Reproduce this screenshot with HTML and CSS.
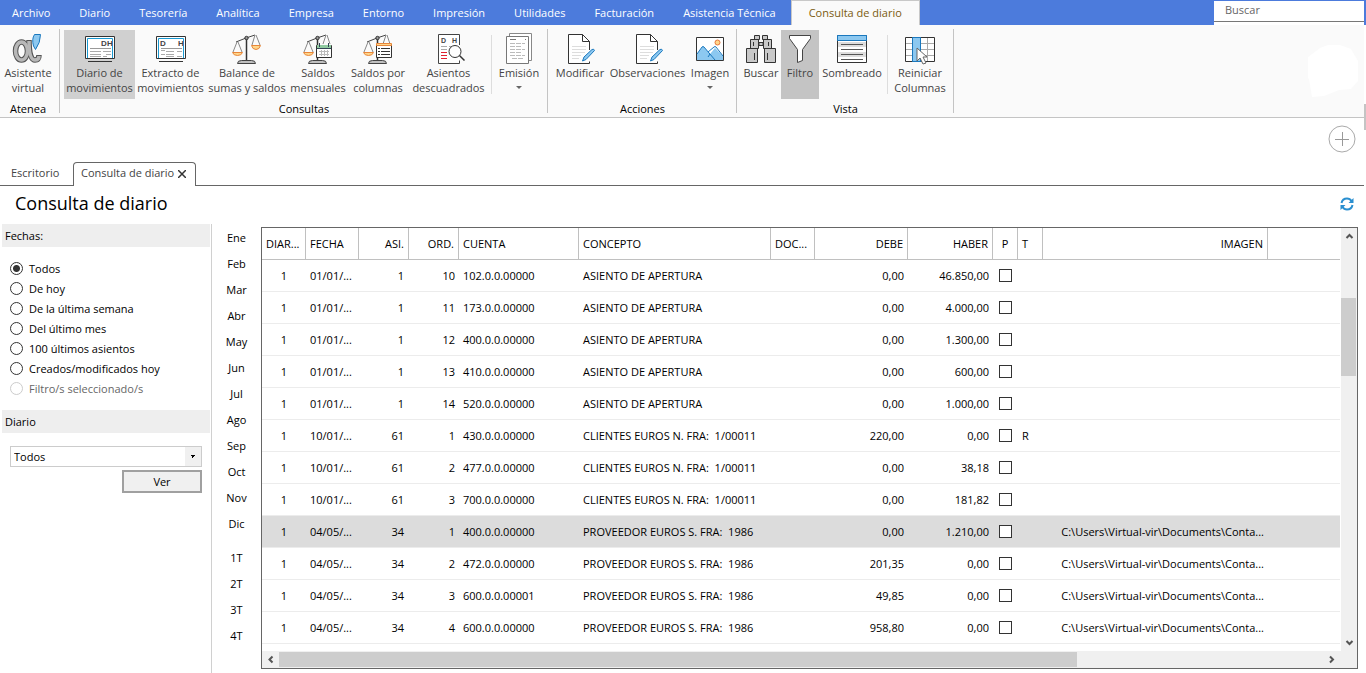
FILE: index.html
```html
<!DOCTYPE html>
<html lang="es">
<head>
<meta charset="utf-8">
<title>Consulta de diario</title>
<link rel="stylesheet" href="styles.css">
</head>
<body>
<svg class="defs" width="0" height="0" aria-hidden="true">
  <defs>
    <g id="scale-left">
      <path d="M5 9 15 5l9-3" fill="none" stroke="#444"/>
      <path d="M6 9 2 19M7 9l4 10" fill="none" stroke="#888"/>
      <path d="M1.500 19.500h10q-1 3-5 3t-5-3z" fill="#ffd68a" stroke="#e8863a"/>
      <path d="M15.500 5v22" stroke="#333" stroke-width="1.500"/>
      <circle cx="15.500" cy="5" r="1.700" fill="#999" stroke="#333"/>
      <path d="M6.500 30.500q0-3 4-3h10q4 0 4 3z" fill="#c0c0c0" stroke="#444"/>
    </g>
    <g id="page-pencil">
      <path d="M4.500 1.500h14l7 7v21h-21z" fill="#fff"/>
      <path d="M25.500 17V8.500l-7-7h-14v29h21v-2" fill="none" stroke="#333"/>
      <path d="M18.500 1.500v7h7" fill="none" stroke="#333"/>
      <path d="M8 13.500h14M8 16.500h14M8 19.500h13M8 22.500h9M8 25.500h7" stroke="#ddd"/>
      <path d="m18.500 28 1.500-4 8-7.500q2-1 2.500 1L22 26.500z" fill="#8cc8f0" stroke="#1a78be"/>
    </g>
  </defs>
</svg>

<header>
  <nav class="menu">
    <a class="menu-item" href="#">Archivo</a>
    <a class="menu-item" href="#">Diario</a>
    <a class="menu-item" href="#">Tesorería</a>
    <a class="menu-item" href="#">Analítica</a>
    <a class="menu-item" href="#">Empresa</a>
    <a class="menu-item" href="#">Entorno</a>
    <a class="menu-item" href="#">Impresión</a>
    <a class="menu-item" href="#">Utilidades</a>
    <a class="menu-item" href="#">Facturación</a>
    <a class="menu-item" href="#">Asistencia Técnica</a>
    <a class="menu-item current" href="#">Consulta de diario</a>
    <div class="search"><input type="text" placeholder="Buscar" aria-label="Buscar"></div>
  </nav>

  <div class="ribbon">
    <section class="group">
      <div class="tools">
        <button class="tool w56">
          <svg viewBox="0 0 32 32"><g fill="none" stroke="#555" stroke-width="5.500"><ellipse cx="9.500" cy="18" rx="6" ry="9"/><path d="M17 7q0 20 6 20 4 0 4-5"/></g><g fill="none" stroke="#b8b8b8" stroke-width="3.500"><ellipse cx="9.500" cy="18" rx="6" ry="9"/><path d="M17 8q0 19 6 19 4 0 4-4"/></g><path d="M21.500 13q-2-7 1-11.500h6q0 8-5 15z" fill="#8cc8f0" stroke="#1a78be"/></svg>
          <span>Asistente<br>virtual</span></button>
      </div>
      <h2>Atenea</h2>
    </section>
    <section class="group">
      <div class="tools">
        <button class="tool w71 on">
          <svg viewBox="0 0 32 32"><path d="M1.500 3.500h29v22h-29z" fill="#fff" stroke="#333"/><path d="M3.500 25V5.500h25V25" fill="none" stroke="#1a9ad2"/><path d="M4 28.500h24" stroke="#333"/><path d="M6 15.500h21" stroke="#999"/><path d="M6 18.500h11M19 18.500h8M6 21.500h11M22 21.500h5M6 23.500h11M19 23.500h4" stroke="#aaa"/><text x="17" y="13" class="dh">D</text><text x="23" y="13" class="dh">H</text></svg>
          <span>Diario de<br>movimientos</span></button>
        <button class="tool w71">
          <svg viewBox="0 0 32 32"><path d="M1.500 3.500h29v22h-29z" fill="#fff" stroke="#333"/><path d="M3.500 25V5.500h25V25" fill="none" stroke="#1a9ad2"/><path d="M4 28.500h24" stroke="#333"/><path d="M6 15.500h21" stroke="#999"/><path d="M6 17.500h4M11 18.500h8M22 18.500h5M6 21.500h4M11 21.500h8M11 23.500h8M22 23.500h5" stroke="#aaa"/><text x="5" y="13" class="dh">D</text><text x="23" y="13" class="dh">H</text></svg>
          <span>Extracto de<br>movimientos</span></button>
        <button class="tool w82">
          <svg viewBox="0 0 32 32"><use href="#scale-left"/><path d="m24 2-3 10M25 2l4 10" fill="none" stroke="#888"/><path d="M20.500 12.500h9q-1 4-4.500 4t-4.500-4z" fill="#ffd68a" stroke="#e8863a"/></svg>
          <span>Balance de<br>sumas y saldos</span></button>
        <button class="tool w60">
          <svg viewBox="0 0 32 32"><use href="#scale-left"/><path d="m24 2-3 9M25 2l3 9" fill="none" stroke="#888"/><path d="M14.500 12.500h15v12h-15z" fill="#fff" stroke="#333"/><path d="M15 12h14v3H15z" fill="#8fcaa0"/><path d="M14.500 15.500h15M17.500 10v4M26.500 10v4" stroke="#345"/><path d="M17 18.500h10M17 21.500h10M19.500 17v6M22.500 17v6M25.500 17v6" stroke="#bbb"/></svg>
          <span>Saldos<br>mensuales</span></button>
        <button class="tool w60">
          <svg viewBox="0 0 32 32"><use href="#scale-left"/><path d="m24 2-3 9M25 2l3 9" fill="none" stroke="#888"/><path d="M14.500 11.500h15v13h-15z" fill="#fff" stroke="#333"/><path d="M14.500 10.500h15v2h-15z" fill="#ffd68a" stroke="#e8863a"/><path d="M16 15.500h2M16 18.500h2M16 21.500h2M19 15.500h9M19 18.500h9M19 21.500h9" stroke="#333"/></svg>
          <span>Saldos por<br>columnas</span></button>
        <button class="tool w81">
          <svg viewBox="0 0 32 32"><path d="M26.500 12V1.500h-21v29h21v-3" fill="#fff" stroke="#444"/><text x="8" y="10" class="dh small">D</text><text x="19" y="10" class="dh small">H</text><path d="M8 13.500h6M8 16.500h6M16 13.500h3" stroke="#aaa"/><path d="M8 19.500h6M8 22.500h6M8 25.500h6" stroke="#e02030"/><circle cx="22" cy="18.500" r="6" fill="#fff" stroke="#333"/><path d="m26.500 22.500 5 5" stroke="#333" stroke-width="1.500"/></svg>
          <span>Asientos<br>descuadrados</span></button>
        <i class="divider"></i>
        <button class="tool w50">
          <svg viewBox="0 0 32 32"><path d="M6.500 4V.500h22v27H26" fill="#fff" stroke="#888"/><path d="M3.500 3.500h22v27h-22z" fill="#fff" stroke="#777"/><path d="M7 6.500h6M22 6.500h1" stroke="#777"/><path d="M7 10.500h15M7 13.500h12M7 16.500h15M7 19.500h12M7 22.500h15M9 25.500h11" stroke="#bbb" stroke-dasharray="5 1"/></svg>
          <span>Emisión</span><i class="caret"></i></button>
      </div>
      <h2>Consultas</h2>
    </section>
    <section class="group">
      <div class="tools">
        <button class="tool w56"><svg viewBox="0 0 32 32"><use href="#page-pencil"/></svg><span>Modificar</span></button>
        <button class="tool w79"><svg viewBox="0 0 32 32"><use href="#page-pencil"/></svg><span>Observaciones</span></button>
        <button class="tool w46"><svg viewBox="0 0 32 32"><path d="M2.500 4.500h27v23h-27z" fill="#fff" stroke="#333"/><path d="m3 21 6-8 7 8 5-6 8 8v4H3z" fill="#8cc8f0"/><path d="m3 21 5-7q1-1 2 0l11 13M14 19l6-5q1-1 2 0l7 9M16 21l-2 3" fill="none" stroke="#1a78be"/><circle cx="23.500" cy="9.500" r="2.500" fill="#ffd68a" stroke="#e8763a"/></svg><span>Imagen</span><i class="caret"></i></button>
      </div>
      <h2>Acciones</h2>
    </section>
    <section class="group">
      <div class="tools">
        <button class="tool w40"><svg viewBox="0 0 32 32"><path d="M9.500 2.500h5v4h-5zM17.500 2.500h5v4h-5zM5.500 6.500h8v9h-8zM18.500 6.500h8v9h-8zM1.500 15.500h11v14h-11zM19.500 15.500h11v14h-11zM14 9.500h4v3h-4z" fill="#c8c8c8" stroke="#333"/><path d="M8.500 9v4M23.500 9v4M9.500 20v7M22.500 20v7" stroke="#333"/></svg><span>Buscar</span></button>
        <button class="tool w38 on filter"><svg viewBox="0 0 32 32"><path d="M5.500 2.500h21v3l-8 11v11l-5 2v-13l-8-11z" fill="#fff" stroke="#444"/></svg><span>Filtro</span></button>
        <button class="tool w66"><svg viewBox="0 0 32 32"><path d="M1.500 2.500h29v27h-29z" fill="#fff" stroke="#333"/><path d="M2 9h28v5H2zM2 19h28v5H2z" fill="#ddd"/><path d="M1.500 2.500h29v5h-29z" fill="#8cc8f0" stroke="#1a78be"/><path d="M5 11.500h22M5 16.500h22M5 21.500h22M5 26.500h22" stroke="#555"/></svg><span>Sombreado</span></button>
        <i class="divider"></i>
        <button class="tool w60"><svg viewBox="0 0 32 32"><path d="M1.500 4.500h29v24h-29z" fill="#fff" stroke="#333"/><path d="M2 10.500h28M2 16.500h28M2 22.500h28M23.500 5v23" stroke="#aaa"/><path d="M8.500 4.500h8v24h-8z" fill="#8cc8f0" stroke="#1a78be"/><path d="M13 15v13l3-3 3 6 3-1-3-6h4z" fill="#fff" stroke="#666"/></svg><span>Reiniciar<br>Columnas</span></button>
      </div>
      <h2>Vista</h2>
    </section>
    <svg class="patch" viewBox="0 0 50 52"><path d="M0 12 12 3 20 0h12l11 4 7 12v20l-7 8-12 1-15 6-12 1-3-18-1-1z" fill="#fff"/></svg>
  </div>
</header>

<div class="tabbar">
  <button class="add" aria-label="Añadir pestaña"><svg viewBox="0 0 28 28"><circle cx="14" cy="14" r="13" fill="none" stroke="#aaa"/><path d="M7 14.500h14M14.500 7v14" stroke="#999"/></svg></button>
  <div class="tabs">
    <a class="tab" href="#">Escritorio</a>
    <div class="tab open"><a href="#">Consulta de diario</a><button aria-label="Cerrar"><svg viewBox="0 0 8 8"><path d="m0 0 8 8M8 0 0 8" stroke="#333" stroke-width="1.500"/></svg></button></div>
  </div>
</div>

<main>
  <div class="heading">
    <h1>Consulta de diario</h1>
    <button aria-label="Actualizar"><svg viewBox="0 0 14 14"><path d="M1.500 6Q2.500 1.500 7 1.500q3 0 4.500 2.500M12.500 8q-1 4.500-5.500 4.500-3 0-4.500-2.500" fill="none" stroke="#2a8fd0" stroke-width="2"/><path d="M13.500 1v5h-5zM.500 13V8h5z" fill="#2a8fd0"/></svg></button>
  </div>
  <div class="work">
    <form class="side">
      <h2>Fechas:</h2>
      <div class="radios">
        <label><input type="radio" name="f" checked>Todos</label>
        <label><input type="radio" name="f">De hoy</label>
        <label><input type="radio" name="f">De la última semana</label>
        <label><input type="radio" name="f">Del último mes</label>
        <label><input type="radio" name="f">100 últimos asientos</label>
        <label><input type="radio" name="f">Creados/modificados hoy</label>
        <label class="off"><input type="radio" name="f" disabled>Filtro/s seleccionado/s</label>
      </div>
      <h2>Diario</h2>
      <div class="pick">
        <select aria-label="Diario"><option>Todos</option></select>
        <button type="button">Ver</button>
      </div>
    </form>
    <nav class="months">
      <a href="#">Ene</a><a href="#">Feb</a><a href="#">Mar</a><a href="#">Abr</a><a href="#">May</a><a href="#">Jun</a><a href="#">Jul</a><a href="#">Ago</a><a href="#">Sep</a><a href="#">Oct</a><a href="#">Nov</a><a href="#">Dic</a>
      <a class="quarter" href="#">1T</a><a href="#">2T</a><a href="#">3T</a><a href="#">4T</a>
    </nav>
    <div class="grid">
      <div class="sheet">
        <table>
          <colgroup><col class="c44"><col class="c53"><col class="c50"><col class="c50"><col class="c120"><col class="c192"><col class="c44"><col class="c93"><col class="c85"><col class="c25"><col class="c25"><col class="c225"><col></colgroup>
          <thead><tr><th>DIAR...</th><th>FECHA</th><th class="r">ASI.</th><th class="r">ORD.</th><th>CUENTA</th><th>CONCEPTO</th><th>DOC...</th><th class="r">DEBE</th><th class="r">HABER</th><th class="c">P</th><th>T</th><th class="r">IMAGEN</th><th></th></tr></thead>
          <tbody id="rows"></tbody>
        </table>
      </div>
      <div class="vbar"><svg viewBox="0 0 17 17"><path d="m5.500 10 3-3 3 3" fill="none" stroke="#555" stroke-width="2"/></svg><i></i><svg viewBox="0 0 17 17"><path d="m5.500 7 3 3 3-3" fill="none" stroke="#555" stroke-width="2"/></svg></div>
      <div class="hbar"><svg viewBox="0 0 17 17"><path d="m10.500 5.500-3 3 3 3" fill="none" stroke="#555" stroke-width="2"/></svg><i></i><svg viewBox="0 0 17 17"><path d="m7 5.500 3 3-3 3" fill="none" stroke="#555" stroke-width="2"/></svg></div>
    </div>
  </div>
</main>
<script src="rows.js"></script>
</body>
</html>
```
FILE: rows.js
```js
const image = "C:\\Users\\Virtual-vir\\Documents\\Conta...";
const entries = [
  ["01/01/...", 1, 10, "102.0.0.00000", "ASIENTO DE APERTURA", "0,00", "46.850,00", "", ""],
  ["01/01/...", 1, 11, "173.0.0.00000", "ASIENTO DE APERTURA", "0,00", "4.000,00", "", ""],
  ["01/01/...", 1, 12, "400.0.0.00000", "ASIENTO DE APERTURA", "0,00", "1.300,00", "", ""],
  ["01/01/...", 1, 13, "410.0.0.00000", "ASIENTO DE APERTURA", "0,00", "600,00", "", ""],
  ["01/01/...", 1, 14, "520.0.0.00000", "ASIENTO DE APERTURA", "0,00", "1.000,00", "", ""],
  ["10/01/...", 61, 1, "430.0.0.00000", "CLIENTES EUROS N. FRA:  1/00011", "220,00", "0,00", "R", ""],
  ["10/01/...", 61, 2, "477.0.0.00000", "CLIENTES EUROS N. FRA:  1/00011", "0,00", "38,18", "", ""],
  ["10/01/...", 61, 3, "700.0.0.00000", "CLIENTES EUROS N. FRA:  1/00011", "0,00", "181,82", "", ""],
  ["04/05/...", 34, 1, "400.0.0.00000", "PROVEEDOR EUROS S. FRA:  1986", "0,00", "1.210,00", "", image],
  ["04/05/...", 34, 2, "472.0.0.00000", "PROVEEDOR EUROS S. FRA:  1986", "201,35", "0,00", "", image],
  ["04/05/...", 34, 3, "600.0.0.00001", "PROVEEDOR EUROS S. FRA:  1986", "49,85", "0,00", "", image],
  ["04/05/...", 34, 4, "600.0.0.00000", "PROVEEDOR EUROS S. FRA:  1986", "958,80", "0,00", "", image]
];
const selected = 8;
document.getElementById("rows").innerHTML = entries.map((e, i) =>
  `<tr class="${i === selected ? "selected" : ""}"><td class="c">1</td><td>${e[0]}</td><td class="r asi">${e[1]}</td>` +
  `<td class="r">${e[2]}</td><td>${e[3]}</td><td>${e[4]}</td><td></td><td class="r">${e[5]}</td><td class="r">${e[6]}</td>` +
  `<td class="c p"><input type="checkbox" aria-label="Punteo ${i + 1}"></td><td>${e[7]}</td><td class="r">${e[8]}</td><td></td></tr>`
).join("");
```
FILE: styles.css
```css
* { box-sizing: border-box; }
body {
  margin: 0;
  padding-right: 2px;
  height: 100vh;
  overflow: hidden;
  display: flex;
  flex-direction: column;
  font: 11px/15px "Open Sans", "Noto Sans", sans-serif;
  color: #000;
  background: #fff linear-gradient(#c4c4c4, #c4c4c4) right 104px / 2px 26px no-repeat;
}
a { color: inherit; text-decoration: none; }
button { font: inherit; color: inherit; border: 0; padding: 0; background: none; }
h1, h2 { margin: 0; font-weight: 400; }
svg { display: block; }
.defs { position: absolute; }

.menu { display: flex; gap: 1px; height: 25px; margin-right: -2px; padding-right: 2px; background: #4c7bdc; color: #fff; }
.menu-item { padding: 5px 14px; }
.menu-item:first-child { padding-left: 12px; }
.menu-item.current { padding: 4px 17px; background: #fafafa; color: #7a5a10; border: 1px solid #c8c8c8; border-bottom: 0; }
.search { width: 150px; margin: 1px 0 0 auto; background: #fff; }
.search input { display: block; width: 100%; height: 21px; padding: 0 11px 3px; border: 0; border-bottom: 1px solid #777; background: none; font: inherit; }
.search input::placeholder { color: #666; opacity: 1; }

.ribbon { display: flex; height: 93px; background: #fafafa; border-bottom: 1px solid #c4c4c4; }
.group { display: flex; flex-direction: column; padding: 5px 4px 0; background: linear-gradient(#c4c4c4, #c4c4c4) right 4px / 1px 84px no-repeat; }
.group:first-child { padding-left: 0; }
.group h2 { font-size: 11px; text-align: center; margin-top: 2px; }
.tools { display: flex; height: 69px; }
.tool { padding-top: 3px; color: #444; display: flex; flex-direction: column; align-items: center; white-space: nowrap; line-height: 15px; }
.tool svg { width: 32px; height: 32px; }
.tool.on { background: #d0d0d0; }
.tool.filter { background: #c4c4c4; }
.caret { margin-top: 6px; border: 3px solid transparent; border-top-color: #666; border-bottom: 0; }
.divider { width: 1px; height: 59px; margin: 5px 2px 0; background: #ddd; }
.w38 { width: 38px; } .w40 { width: 40px; } .w46 { width: 46px; } .w50 { width: 50px; }
.w56 { width: 56px; } .w60 { width: 60px; } .w66 { width: 66px; }
.w71 { width: 71px; } .w79 { width: 79px; } .w81 { width: 81px; } .w82 { width: 82px; }
.dh { font: bold 8px "Liberation Sans", sans-serif; fill: #444; }
.dh.small { font-size: 7px; }
.patch { width: 50px; height: 52px; margin: 20px 6px 0 auto; }

.tabbar { display: flex; flex-direction: column; height: 68px; border-bottom: 1px solid #666; }
.add { align-self: flex-end; width: 28px; height: 28px; margin: 7px 8px 9px 0; }
.tabs { display: flex; color: #444; }
.tab { height: 24px; padding: 3px 0 0 11px; width: 73px; }
.tab.open { display: flex; align-items: flex-start; justify-content: space-between; width: 123px; padding: 2px 9px 0 7px; border: 1px solid #666; border-bottom: 0; border-radius: 4px 4px 0 0; background: #fff; }
.tab button { width: 8px; margin-top: 5px; }

main { flex: 1; min-height: 0; display: flex; flex-direction: column; }
.heading { display: flex; justify-content: space-between; align-items: center; height: 38px; padding: 0 10px 4px 15px; }
.heading h1 { font-size: 18px; line-height: 24px; }
.heading button { width: 14px; margin-top: 2px; }
.work { flex: 1; min-height: 0; display: flex; }
.side { width: 212px; border-right: 1px solid #d0d0d0; padding: 0 1px 0 2px; }
.side h2 { height: 23px; padding: 4px 3px; background: #eee; font-size: 11px; }
.radios { padding: 11px 8px 12px; }
.radios label { display: flex; align-items: center; gap: 6px; height: 20px; }
.radios input { appearance: none; width: 13px; height: 13px; margin: 0; border: 1px solid #333; border-radius: 50%; }
.radios input:checked { background: radial-gradient(#333 3px, transparent 4px); }
.radios .off { color: #666; }
.radios .off input { border-color: #ccc; }
.pick { display: flex; flex-direction: column; align-items: flex-end; gap: 3px; padding: 13px 8px 0; }
.pick select {
  appearance: none; width: 100%; height: 21px; padding: 0 3px; border: 1px solid #ccc; border-radius: 0; font: inherit; color: inherit;
  background:
    linear-gradient(to bottom left, #000 50%, transparent 50%) right 8px center / 3px 3px no-repeat,
    linear-gradient(to bottom right, #000 50%, transparent 50%) right 5px center / 3px 3px no-repeat,
    linear-gradient(#f0f0f0, #f0f0f0) right / 16px 100% no-repeat, #fff;
}
.pick button { width: 80px; height: 23px; border: 2px solid #a0a0a0; background: #f0f0f0; }
.months { width: 49px; padding-top: 1px; display: flex; flex-direction: column; text-align: center; line-height: 26px; }
.months .quarter { margin-top: 8px; }

.grid { flex: 1; min-width: 0; display: grid; grid-template: 1fr 17px / 1fr 17px; margin: 3px 6px 4px 0; border: 1px solid #666; }
.sheet { min-height: 0; overflow: hidden; }
table { width: 100%; table-layout: fixed; border-collapse: separate; border-spacing: 0; }
th, td { height: 32px; padding: 0 4px; text-align: left; font-weight: 400; white-space: nowrap; border-bottom: 1px solid #ececec; }
td { white-space: pre; }
th { border-bottom-color: #c0c0c0; border-right: 1px solid #c0c0c0; }
th:last-child { border-right: 0; }
.r { text-align: right; }
.c { text-align: center; }
.p { padding: 0; }
td.asi { padding-right: 5px; }
.selected { background: #dcdcdc; }
td input { appearance: none; display: block; width: 13px; height: 13px; margin: 0 6px; border: 1px solid #333; background: #fff; }
.c25 { width: 25px; } .c44 { width: 44px; } .c50 { width: 50px; } .c53 { width: 53px; } .c85 { width: 85px; }
.c93 { width: 93px; } .c120 { width: 120px; } .c192 { width: 192px; } .c225 { width: 225px; }
.vbar, .hbar { display: flex; background: #f0f0f0; }
.vbar svg, .hbar svg { flex: none; width: 17px; height: 17px; }
.vbar { flex-direction: column; margin-left: 1px; }
.vbar i { height: 78px; margin: 53px 1px auto 0; background: #cdcdcd; }
.hbar { grid-column: 1 / 3; padding-right: 17px; }
.hbar i { width: 74%; margin: 1px auto 1px 0; background: #cdcdcd; }
```
